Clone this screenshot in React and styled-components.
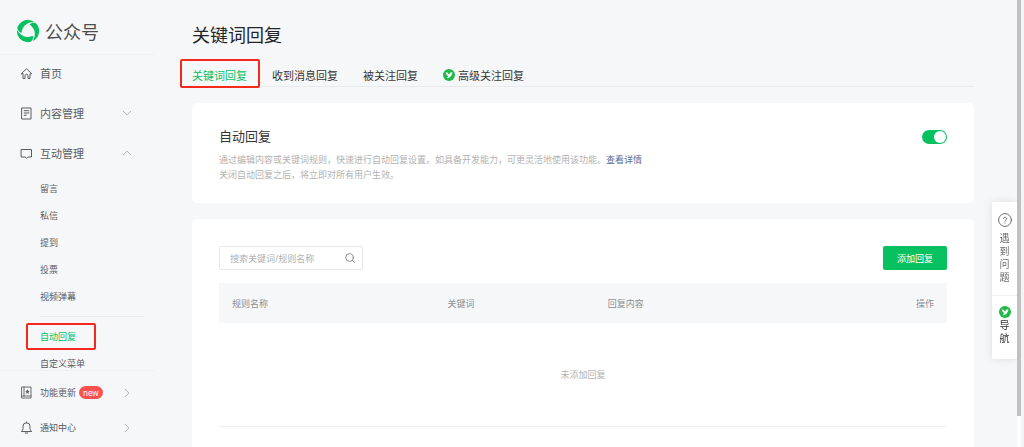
import { useState } from "react";
import styled, { createGlobalStyle, css } from "styled-components";

const GlobalStyle = createGlobalStyle`
  * {
    box-sizing: border-box;
  }
  body {
    margin: 0;
    background: #f6f7f9;
    color: #353535;
    font-family: "Noto Sans", "Noto Sans CJK SC", sans-serif;
    font-size: 11px;
  }
  button,
  input {
    font-family: inherit;
  }
  a {
    color: inherit;
    text-decoration: none;
  }
`;

const Page = styled.div`
  display: flex;
  height: 100vh;
  overflow: hidden;
`;

const Sidebar = styled.aside`
  flex: 0 0 154px;
  display: flex;
  flex-direction: column;
`;

const Brand = styled.a`
  flex: none;
  display: flex;
  align-items: center;
  gap: 5px;
  height: 55px;
  padding: 7px 0 0 16px;
  border-bottom: 1px solid #eff0f2;
  color: #4c4d4f;
  font-size: 18px;
`;

const Menu = styled.nav`
  flex: 1;
  min-height: 0;
  overflow: hidden;
`;

const MenuFooter = styled.nav`
  flex: none;
  padding: 4px 0 2px;
  border-top: 1px solid #eff0f2;
`;

const MenuItem = styled.a`
  display: flex;
  align-items: center;
  height: ${({ $compact }) => ($compact ? 35 : 40)}px;
  padding: ${({ $compact }) => ($compact ? "0 20px" : "0 20px 4px")};
  color: #5b5c5e;
  font-size: ${({ $compact }) => ($compact ? 9 : 11)}px;
  > svg:first-child {
    width: 13px;
    margin-right: 7px;
  }
`;

const Chevron = styled.svg`
  width: 10px;
  height: 10px;
  margin: 0 2px 0 auto;
  color: #b0b1b3;
  transform: rotate(${({ $turn = 0 }) => $turn}deg);
`;

const Badge = styled.span`
  margin-left: 3px;
  padding: 0 4px;
  border-radius: 7px;
  background: #fa5151;
  color: #fff;
  font-size: 8px;
  line-height: 13px;
`;

const SubMenu = styled.div`
  display: flex;
  flex-direction: column;
  padding: 0 10px 0 40px;
`;

const marked = css`
  position: relative;
  color: #07c160;
  &::after {
    content: "";
    position: absolute;
    inset: ${({ $inset }) => $inset};
    border: 2px solid #f5281e;
    border-radius: 2px;
  }
`;

const SubItem = styled.a`
  align-self: flex-start;
  color: #5b5c5e;
  font-size: 9px;
  line-height: 27px;
  ${({ $active }) => $active && marked}
`;

const SubDivider = styled.hr`
  width: 100%;
  margin: 6px 0;
  border: 0;
  border-top: 1px solid #eaebed;
`;

const Main = styled.main`
  flex: 1;
  min-width: 0;
  padding: 20px 50px 0 38px;
`;

const Title = styled.h1`
  margin: 0;
  color: #242526;
  font-size: 18px;
  font-weight: 400;
  line-height: 30px;
`;

const Tabs = styled.nav`
  display: flex;
  gap: 25px;
  margin-top: 14px;
  border-bottom: 1px solid #e9eaec;
`;

const Tab = styled.a`
  display: flex;
  align-items: center;
  gap: 3px;
  height: 22px;
  color: #353535;
  ${({ $active }) => $active && marked}
`;

const Card = styled.section`
  margin-top: 16px;
  padding: 27px;
  border-radius: 5px;
  background: #fff;
`;

const SwitchCard = styled(Card)`
  display: flex;
  align-items: flex-start;
  justify-content: space-between;
  padding: 23px 27px 21px;
`;

const CardTitle = styled.h2`
  margin: 0 0 6px;
  color: #353535;
  font-size: 13px;
  font-weight: 400;
  line-height: 20px;
`;

const Description = styled.p`
  margin: 0;
  color: #b2b2b2;
  font-size: 9px;
  line-height: 15px;
`;

const DetailLink = styled.a`
  color: #576b95;
`;

const Toggle = styled.input`
  appearance: none;
  flex: none;
  width: 25px;
  height: 14px;
  margin: 4px 0 0;
  padding: 1px;
  border-radius: 7px;
  background: #d8d8d8;
  cursor: pointer;
  &::before {
    content: "";
    display: block;
    width: 12px;
    height: 12px;
    border-radius: 50%;
    background: #fff;
  }
  &:checked {
    background: #07c160;
  }
  &:checked::before {
    margin-left: auto;
  }
`;

const Toolbar = styled.div`
  display: flex;
  justify-content: space-between;
  margin-bottom: 13px;
`;

const SearchBox = styled.label`
  display: flex;
  align-items: center;
  width: 144px;
  height: 24px;
  padding: 0 6px 0 10px;
  border: 1px solid #e7e8ea;
  border-radius: 2px;
  color: #8c8d8f;
`;

const SearchInput = styled.input`
  flex: 1;
  min-width: 0;
  padding: 0;
  border: 0;
  outline: 0;
  background: none;
  font-size: 9px;
  &::placeholder {
    color: #b2b2b2;
  }
`;

const AddButton = styled.button`
  width: 64px;
  height: 24px;
  padding: 0;
  border: 0;
  border-radius: 2px;
  background: #07c160;
  color: #fff;
  font-size: 9px;
`;

const Table = styled.table`
  width: 100%;
  border-collapse: collapse;
  table-layout: fixed;
  font-size: 9px;
  th {
    height: 40px;
    padding: 0 13px;
    background: #f6f7f9;
    color: #8e8f91;
    font-weight: 400;
    text-align: left;
  }
  th:first-child {
    width: 29.6%;
  }
  th:nth-child(2) {
    width: 22%;
  }
  th:last-child {
    text-align: right;
  }
`;

const EmptyCell = styled.td`
  height: 103px;
  padding: 0;
  border-bottom: 1px solid #eeeff0;
  color: #b2b2b2;
  text-align: center;
`;

const TableEnd = styled.div`
  height: 80px;
`;

const FloatBar = styled.aside`
  position: fixed;
  top: 202px;
  right: 7px;
  width: 25px;
  border-radius: 2px 0 0 2px;
  background: #fff;
  box-shadow: 0 0 10px rgba(0, 0, 0, 0.1);
`;

const FloatItem = styled.a`
  display: flex;
  flex-direction: column;
  align-items: center;
  gap: ${({ $gap }) => $gap}px;
  padding: 11px 6px;
  color: ${({ $color }) => $color};
  font-size: 10px;
  line-height: 13px;
  text-align: center;
  & + & {
    padding: 10px 6px 14px;
    border-top: 1px solid #eeeff0;
  }
  span {
    width: 10px;
  }
`;

const ScrollTrack = styled.div`
  position: fixed;
  top: 0;
  right: 0;
  bottom: 0;
  width: 7px;
  border-right: 3px solid #f3f4f6;
  background: #fff;
`;

const ScrollThumb = styled.div`
  height: 93%;
  background: #c1c1c1;
`;

const stroke = {
  fill: "none",
  stroke: "currentColor",
  strokeLinecap: "round",
  strokeLinejoin: "round",
};

const blade =
  "M1.300 9A11 11 0 0 1 18.300 2.900C12.500 3 6.500 5.500 5.600 13.800 3.300 13.400 1.700 11.500 1.300 9Z";

const LogoIcon = () => (
  <svg width="24" height="24" viewBox="0 0 24 24" fill="#07c160">
    <path d={blade} />
    <path d={blade} transform="rotate(120 12 12)" />
    <path d={blade} transform="rotate(240 12 12)" />
  </svg>
);

const HomeIcon = () => (
  <svg height="13" viewBox="0 0 13 13" {...stroke}>
    <path d="M1.300 6.800 6.500 1.700l5.200 5.100H10v4.700H8V8.800a1.500 1.500 0 0 0-3 0v2.700H3V6.800Z" />
  </svg>
);

const DocIcon = () => (
  <svg height="13" viewBox="0 0 13 13" {...stroke}>
    <path d="M2 1h9v11H2zM4.200 3.700h4.600M4.200 6h4.600M4.200 8.300h2" />
  </svg>
);

const ChatIcon = () => (
  <svg height="13" viewBox="0 0 13 13" {...stroke}>
    <path d="M1.500 2.500h10v7.500H7.800l-1.300 1.300L5.200 10H1.500Z" />
  </svg>
);

const UpdateIcon = () => (
  <svg height="13" viewBox="0 0 13 13" {...stroke} strokeWidth="0.9">
    <path d="M2 1h9v11H2zM4 1v9M2 10h9" />
    <path
      d="m7.500 3.300.7 1.500 1.600.2-1.200 1.100.3 1.600-1.400-.8-1.400.8.3-1.600L5.200 5l1.600-.2Z"
      fill="currentColor"
      stroke="none"
    />
  </svg>
);

const BellIcon = () => (
  <svg height="13" viewBox="0 0 13 13" {...stroke}>
    <path d="M1.600 10.300c1-.8 1.400-1.600 1.400-3V5.300a3.500 3.500 0 0 1 7 0v2c0 1.400.4 2.200 1.400 3ZM5.300 12h2.400M6.500 1v.8" />
  </svg>
);

const Arrow = ({ turn }) => (
  <Chevron viewBox="0 0 10 10" $turn={turn} {...stroke}>
    <path d="m1.300 3.200 3.700 3.700 3.700-3.700" />
  </Chevron>
);

const SearchIcon = () => (
  <svg width="12" height="12" viewBox="0 0 12 12" {...stroke}>
    <circle cx="5.500" cy="5.500" r="3.800" />
    <path d="m8.300 8.300 2 2" />
  </svg>
);

const HelpIcon = () => (
  <svg width="14" height="14" viewBox="0 0 14 14" {...stroke}>
    <circle cx="7" cy="7" r="6.400" />
    <path d="M5.400 5.700a1.600 1.600 0 1 1 2.500 1.400c-.6.400-.9.600-.9 1.200M7 10v.1" />
  </svg>
);

const SproutIcon = () => (
  <svg width="12" height="12" viewBox="0 0 12 12">
    <circle cx="6" cy="6" r="6" fill="#20b947" />
    <path
      d="M2.700 3.600h1.800L6 5.700l1.200-2.100H9.500C8.800 6.600 7.200 9.200 4.200 9.200L3.900 8c.9-.1 1.300-.4 1.500-1C4 6.700 2.900 5.600 2.700 3.600Z"
      fill="#fff"
    />
  </svg>
);

const subItems = ["留言", "私信", "提到", "投票", "视频弹幕"];

export default function App() {
  const [enabled, setEnabled] = useState(true);

  return (
    <>
      <GlobalStyle />
      <Page>
        <Sidebar>
          <Brand href="#">
            <LogoIcon />
            公众号
          </Brand>
          <Menu>
            <MenuItem href="#">
              <HomeIcon />
              首页
            </MenuItem>
            <MenuItem href="#">
              <DocIcon />
              内容管理
              <Arrow />
            </MenuItem>
            <MenuItem href="#">
              <ChatIcon />
              互动管理
              <Arrow turn={180} />
            </MenuItem>
            <SubMenu>
              {subItems.map((item) => (
                <SubItem href="#" key={item}>
                  {item}
                </SubItem>
              ))}
              <SubDivider />
              <SubItem href="#" $active $inset="0 -20px 0 -14px">
                自动回复
              </SubItem>
              <SubItem href="#">自定义菜单</SubItem>
            </SubMenu>
          </Menu>
          <MenuFooter>
            <MenuItem href="#" $compact>
              <UpdateIcon />
              功能更新
              <Badge>new</Badge>
              <Arrow turn={-90} />
            </MenuItem>
            <MenuItem href="#" $compact>
              <BellIcon />
              通知中心
              <Arrow turn={-90} />
            </MenuItem>
          </MenuFooter>
        </Sidebar>

        <Main>
          <Title>关键词回复</Title>
          <Tabs>
            <Tab href="#" $active $inset="-5px -13px -2px -12px">
              关键词回复
            </Tab>
            <Tab href="#">收到消息回复</Tab>
            <Tab href="#">被关注回复</Tab>
            <Tab href="#">
              <SproutIcon />
              高级关注回复
            </Tab>
          </Tabs>

          <SwitchCard>
            <div>
              <CardTitle id="auto-reply">自动回复</CardTitle>
              <Description>
                通过编辑内容或关键词规则，快速进行自动回复设置。如具备开发能力，可更灵活地使用该功能。
                <DetailLink href="#">查看详情</DetailLink>
                <br />
                关闭自动回复之后，将立即对所有用户生效。
              </Description>
            </div>
            <Toggle
              type="checkbox"
              role="switch"
              aria-labelledby="auto-reply"
              checked={enabled}
              onChange={(e) => setEnabled(e.target.checked)}
            />
          </SwitchCard>

          <Card>
            <Toolbar>
              <SearchBox>
                <SearchInput
                  type="text"
                  placeholder="搜索关键词/规则名称"
                  aria-label="搜索关键词/规则名称"
                />
                <SearchIcon />
              </SearchBox>
              <AddButton type="button">添加回复</AddButton>
            </Toolbar>
            <Table>
              <thead>
                <tr>
                  <th>规则名称</th>
                  <th>关键词</th>
                  <th>回复内容</th>
                  <th>操作</th>
                </tr>
              </thead>
              <tbody>
                <tr>
                  <EmptyCell colSpan={4}>未添加回复</EmptyCell>
                </tr>
              </tbody>
            </Table>
            <TableEnd />
          </Card>
        </Main>
      </Page>

      <FloatBar>
        <FloatItem href="#" $gap={5} $color="#6b6c6e">
          <HelpIcon />
          <span>遇到问题</span>
        </FloatItem>
        <FloatItem href="#" $gap={1} $color="#353535">
          <SproutIcon />
          <span>导航</span>
        </FloatItem>
      </FloatBar>
      <ScrollTrack>
        <ScrollThumb />
      </ScrollTrack>
    </>
  );
}
